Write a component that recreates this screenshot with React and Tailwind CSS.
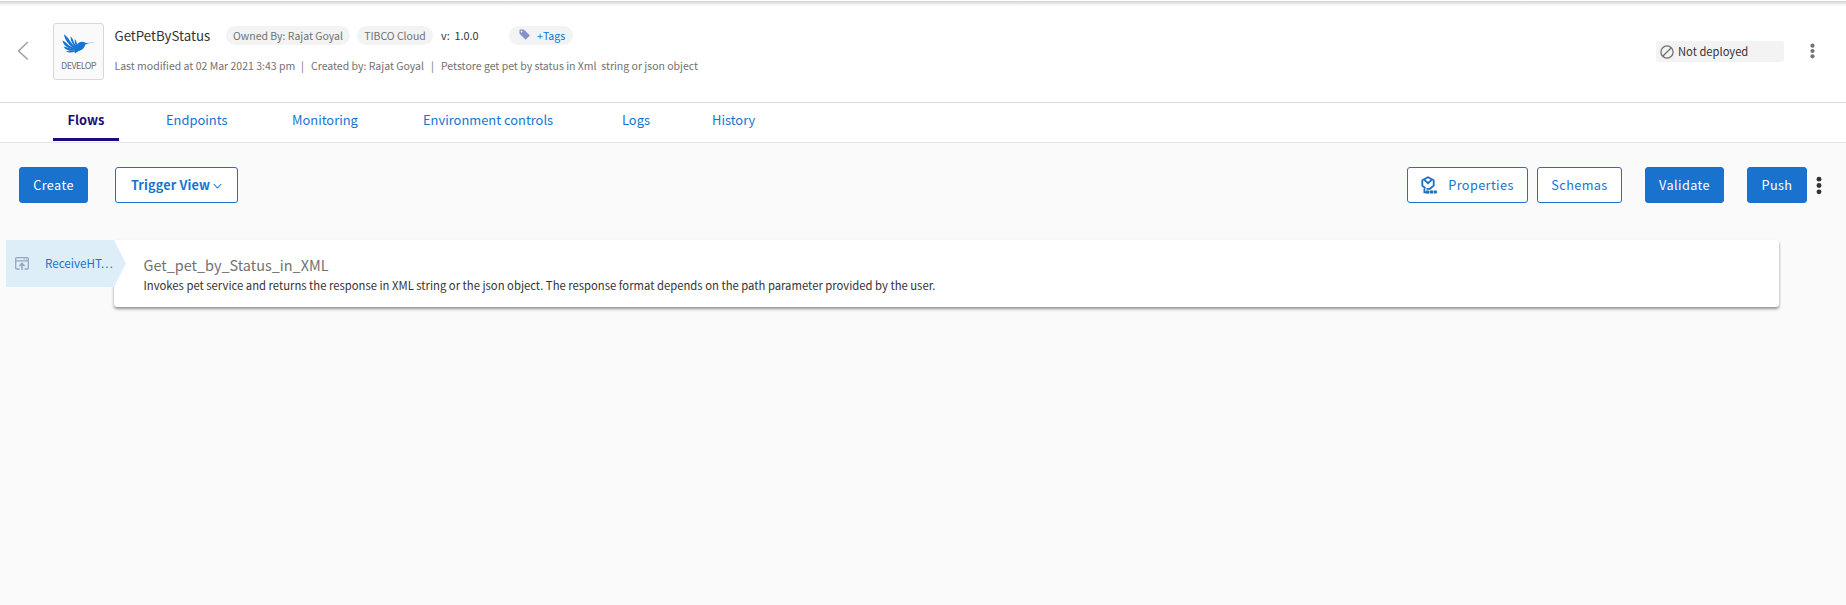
const tabs = [
  { label: 'Endpoints', box: 'ml-[47px] w-[61px]' },
  { label: 'Monitoring', box: 'ml-[65px] w-[65px]' },
  { label: 'Environment controls', box: 'ml-[66px] w-[130px]' },
  { label: 'Logs', box: 'ml-[69px] w-[28px]' },
  { label: 'History', box: 'ml-[62px] w-[44px]' },
];

function Bird() {
  return (
    <svg className="h-[20px] w-[34px] shrink-0" viewBox="0 0 34 20" fill="#1774d1">
      <path d="M33.5 8.6 L26.5 9.3 L23.4 10.4 C22.6 13.2 21 15.8 17.6 16.8 C15.4 17.4 15 18.4 13.2 19.4 L13 18.2 L11.8 18.6 L12.6 16.8 L11 13.6 L12.6 10.4 L15.2 10.8 C16 8.8 17.8 7.8 20 7.8 C21.6 7.8 22.8 8.6 24 8.9 Z" />
      <path d="M2 .6 C3.4 1 6.6 4.4 8 7 C9.6 9.6 12 11.6 13.6 13.4 L11.4 14.4 C6.6 10.4 2.6 6 2 .6 Z" />
      <path d="M8.6 2.6 C9.8 3 11 5.6 11.6 7.6 L14 12.4 L12.4 12.4 C9.8 9 8.4 5.8 8.6 2.6 Z" />
      <path d="M12.8 5 C13.8 6 14.6 8.6 15.8 10.8 L13.8 11 C12.8 9 12.4 7 12.8 5 Z" />
      <path d="M.6 6.6 C2.4 7.4 5 9.8 6.8 11.2 L12.4 14.8 L11 15.6 C5.4 14 1 11.2 .6 6.6 Z" />
      <path d="M1.6 12.4 C4 13 6.4 14 8.6 14.5 L13 15.6 L11.2 16.8 C6.6 16.8 2.8 15.4 1.6 12.4 Z" />
      <path d="M4 17.2 C6.4 17.2 9 16.4 12.6 16.2 L13 17.2 C9.6 18.8 6.4 18.8 4 17.2 Z" />
    </svg>
  );
}

function Dots({ className }) {
  return (
    <svg className={className} viewBox="0 0 6 20" fill="currentColor">
      <circle cx="3" cy="3.3" r="2.6" />
      <circle cx="3" cy="10" r="2.6" />
      <circle cx="3" cy="16.7" r="2.6" />
    </svg>
  );
}

function Header() {
  return (
    <header className="flex h-[97px] items-start border-b border-[#dcdddd] bg-white">
      <svg className="mt-[35px] ml-[17px] h-[20px] w-[12px] shrink-0" viewBox="0 0 12 20" fill="none" stroke="#a3a3a3" strokeWidth="1.6">
        <path d="M10.8 1 L1.6 10 L10.8 18.5" />
      </svg>
      <div className="mt-[17px] ml-[24px] flex h-[57px] w-[51px] shrink-0 flex-col items-center rounded-[3px] border border-[#d8d8d8] bg-[#fafafa] pt-[10px]">
        <Bird />
        <span className="mt-[4px] text-[9px] leading-[16px] tracking-[-0.6px] text-[#727272]">DEVELOP</span>
      </div>
      <div className="ml-[10px] pt-[20px] whitespace-nowrap">
        <div className="flex h-[19px] items-center">
          <span className="w-[112px] shrink-0 pl-[0.5px] text-[13.25px] leading-[19px] text-[#333]">GetPetByStatus</span>
          <span className="flex h-[19px] w-[124px] shrink-0 justify-center rounded-full bg-[#f3f3f3] text-[10.5px] leading-[19px] text-[#727272]">Owned By: Rajat Goyal</span>
          <span className="ml-[7px] flex h-[19px] w-[76px] shrink-0 justify-center rounded-full bg-[#f3f3f3] text-[10.5px] leading-[19px] text-[#727272]">TIBCO Cloud</span>
          <span className="ml-[8px] w-[68px] shrink-0 text-[10.8px] leading-[19px] text-[#333]">v:&nbsp; 1.0.0</span>
          <span className="flex h-[19px] w-[64px] shrink-0 items-center rounded-full bg-[#f3f3f3] pl-[10px] text-[10.6px] leading-[19px] text-[#1774d1]">
            <svg className="mr-[7px] mb-[2px] h-[11px] w-[11px]" viewBox="0 0 11 11" fill="#8591c8">
              <path fillRule="evenodd" d="M.5 1.3 Q.5 .5 1.3 .5 H4.8 L10.4 6 Q10.9 6.5 10.4 7 L7.1 10.3 Q6.6 10.8 6.1 10.3 L.5 4.8 Z M2.6 1.7 A.9 .9 0 1 0 2.61 1.7 Z" />
            </svg>
            +Tags
          </span>
        </div>
        <div className="mt-[11px] flex h-[20px] text-[10.5px] leading-[19px] whitespace-pre text-[#727272]">
          <span className="w-[187px] shrink-0 pl-[0.5px]">Last modified at 02 Mar 2021 3:43 pm</span>
          <span className="w-[10px] shrink-0">|</span>
          <span className="w-[120px] shrink-0">Created by: Rajat Goyal</span>
          <span className="w-[10px] shrink-0">|</span>
          <span>Petstore get pet by status in Xml  string or json object</span>
        </div>
      </div>
      <div className="mt-[35px] ml-auto flex h-[21px] w-[128px] items-center rounded-[3px] bg-[#f3f3f3] pl-[4px] text-[11.2px] leading-[21px] text-[#333]">
        <svg className="mr-[4px] h-[14px] w-[14px]" viewBox="0 0 14 14" fill="none" stroke="#727272" strokeWidth="1.3">
          <circle cx="7" cy="7" r="6.1" />
          <path d="M11.3 2.7 L2.7 11.3" />
        </svg>
        Not deployed
      </div>
      <Dots className="mt-[37px] mr-[31px] ml-[26px] h-[16px] w-[5px] text-[#727272]" />
    </header>
  );
}

function Tabs() {
  return (
    <nav className="flex h-[40px] border-b border-[#e3e4e4] bg-white pl-[53px] text-[12.9px] leading-[34px] text-[#1774d1]">
      <div className="h-[38px] w-[66px] border-b-[3px] border-[#1b0a80] text-center text-[12.8px] font-bold text-[#1b0a80]">Flows</div>
      {tabs.map((t) => (
        <div key={t.label} className={`${t.box} whitespace-nowrap`}>{t.label}</div>
      ))}
    </nav>
  );
}

const button = 'flex h-[36px] shrink-0 items-center justify-center rounded-[3px] border border-[#1a72cf] text-[12.7px]';
const solid = 'bg-[#1a72cf] text-white tracking-[0.4px]';
const outline = 'bg-white text-[#1774d1]';

function Toolbar() {
  return (
    <div className="flex h-[84px] items-start pt-[24px] pl-[19px]">
      <button className={`${button} ${solid} w-[69px]`}>Create</button>
      <button className={`${button} ${outline} ml-[27px] w-[123px] font-bold tracking-[0.15px]`}>
        Trigger View
        <svg className="mt-[1px] ml-[3px] h-[8px] w-[9px]" viewBox="0 0 9 8" fill="none" stroke="currentColor" strokeWidth="1.1">
          <path d="M.8 2 L4.5 6 L8.2 2" />
        </svg>
      </button>
      <button className={`${button} ${outline} ml-auto w-[121px] tracking-[0.4px]`}>
        <svg className="mr-[10px] h-[18px] w-[17px]" viewBox="0 0 17 18" fill="none" stroke="#1a6fc0" strokeWidth="1.8">
          <path d="M4.5 12.4 L1.3 9.6 V4.2 L7 1.2 L12.7 4.2 V9.6 L8.8 12.8 H5.5" />
          <path d="M3.4 3.8 L7 7.2 L10.6 3.8" />
          <path d="M3.4 12.5 V16.4 H7.5" />
          <path d="M5 16 H16.5" strokeWidth="2.8" strokeDasharray="3.2 .6" />
        </svg>
        Properties
      </button>
      <button className={`${button} ${outline} ml-[9px] w-[85px] tracking-[0.4px]`}>Schemas</button>
      <button className={`${button} ${solid} ml-[23px] w-[79px]`}>Validate</button>
      <button className={`${button} ${solid} ml-[23px] w-[60px]`}>Push</button>
      <Dots className="mt-[9px] mr-[24px] ml-[9px] h-[19px] w-[6px] text-[#333]" />
    </div>
  );
}

function FlowRow() {
  return (
    <div className="mt-[13px] flex items-start pl-[6px]">
      <div className="relative z-10 flex h-[47px] w-[120px] shrink-0 items-center bg-[#deeef9] pl-[9px] text-[11.65px] text-[#1774d1] [clip-path:polygon(0_0,108px_0,120px_23.5px,108px_100%,0_100%)]">
        <svg className="mr-[16px] h-[13px] w-[14px]" viewBox="0 0 14 13" fill="none" stroke="#96a6c2" strokeWidth="1.3">
          <path d="M4.5 12 H1.6 Q.7 12 .7 11.1 V1.6 Q.7 .7 1.6 .7 H12.4 Q13.3 .7 13.3 1.6 V11.1 Q13.3 12 12.4 12 H9.5 M.7 3.8 H13.3" />
          <path d="M7 13 V7 M4.4 9 L7 6.4 L9.6 9" strokeWidth="1.6" />
          <path d="M8.6 2.2 H9.6 M10.8 2.2 H11.8" />
        </svg>
        <span className="pb-[2px]">ReceiveHT…</span>
      </div>
      <div className="-ml-[12px] h-[67px] w-[1665px] rounded-[3px] bg-white pt-[13px] pl-[29.5px] shadow-[0_2px_3px_rgba(0,0,0,0.42)]">
        <div className="text-[14.45px] leading-[24px] text-[#727272]">Get_pet_by_Status_in_XML</div>
        <div className="text-[11.29px] leading-[16px] text-[#333]">
          Invokes pet service and returns the response in XML string or the json object. The response format depends on the path parameter provided by the user.
        </div>
      </div>
    </div>
  );
}

export default function App() {
  return (
    <div className="h-[605px] w-full overflow-hidden bg-[#fafafa] font-['Noto_Sans_CJK_SC','Noto_Sans',sans-serif]">
      <div className="h-[6px] border-t border-white bg-linear-to-b from-[#cfd2d2] to-white" />
      <Header />
      <Tabs />
      <Toolbar />
      <FlowRow />
    </div>
  );
}
